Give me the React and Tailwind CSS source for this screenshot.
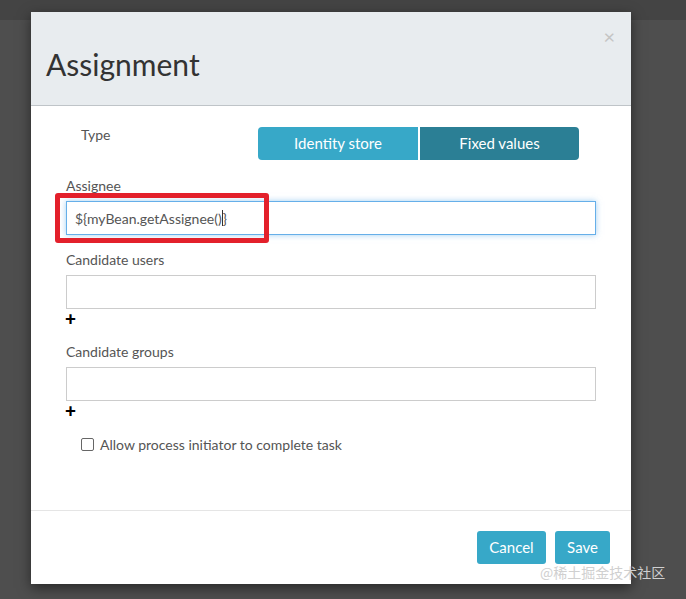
import React from "react";

function Field({ label, children }) {
  return (
    <div className="flex flex-col">
      <label className="text-[14px] text-[#555] leading-[20px] mb-[5px]">{label}</label>
      {children}
    </div>
  );
}

function Plus() {
  return <div className="text-[19px] font-black text-black leading-[14px] h-[14px] mt-[3px] ml-[-1px]">+</div>;
}

export default function App() {
  return (
    <div
      className="relative w-[686px] h-[599px] bg-[#4e4e4e] overflow-hidden"
      style={{ fontFamily: "Lato, 'Noto Sans', sans-serif" }}
    >
      <div className="h-[20px] bg-[#444]" />

      {/* modal */}
      <div className="absolute left-[31px] top-[12px] w-[600px] h-[572px] bg-white flex flex-col shadow-[0_4px_12px_rgba(0,0,0,0.5)]">
        <div className="relative h-[94px] bg-[#e8ecef] border-b border-[#bfc4c8] flex items-center px-[15px] pt-[10px]">
          <h1 className="text-[30px] text-[#333] leading-none">Assignment</h1>
          <button className="absolute right-[16px] top-[14px] text-[20px] text-[#c4c4c4] leading-none">×</button>
        </div>

        <div className="relative flex-1 flex flex-col px-[35px] pt-[21px]">
          <div className="flex items-start">
            <div className="w-[192px] pl-[15px] mt-[-2px] text-[14px] text-[#555] leading-[20px]">Type</div>
            <div className="flex">
              <button className="w-[160px] h-[33px] rounded-l-[4px] bg-[#37a8c8] text-white text-[15px]">Identity store</button>
              <button className="ml-[2px] w-[159px] h-[33px] rounded-r-[4px] bg-[#2b7f95] text-white text-[15px]">Fixed values</button>
            </div>
          </div>

          <div className="mt-[16px]">
            <Field label="Assignee">
              <div className="relative w-[530px] h-[34px] border border-[#66afe9] shadow-[0_0_6px_rgba(102,175,233,0.6)] flex items-center px-[8px] text-[14px] text-[#555]">
                <span>{"${myBean.getAssignee()"}</span>
                <span className="inline-block w-[1px] h-[16px] bg-[#333]" />
                <span>{"}"}</span>
              </div>
            </Field>
          </div>

          <div className="mt-[15px]">
            <Field label="Candidate users">
              <div className="w-[530px] h-[34px] border border-[#ccc]" />
            </Field>
            <Plus />
          </div>

          <div className="mt-[16px]">
            <Field label="Candidate groups">
              <div className="w-[530px] h-[34px] border border-[#ccc]" />
            </Field>
            <Plus />
          </div>

          <label className="flex items-center mt-[16px] ml-[15px] text-[14px] text-[#555]">
            <span className="w-[13px] h-[13px] border border-[#666] rounded-[2px] bg-white mr-[6px]" />
            Allow process initiator to complete task
          </label>

          {/* highlight box */}
          <div className="absolute left-[24px] top-[87px] w-[214px] h-[50px] border-[5px] border-[#e3202b] rounded-[3px]" />
        </div>

        <div className="h-[74px] border-t border-[#e5e5e5] flex items-start justify-end pt-[20px] pr-[21px] gap-[9px]">
          <button className="h-[33px] w-[69px] rounded-[3px] bg-[#37a8c8] text-white text-[15px]">Cancel</button>
          <button className="h-[33px] w-[55px] rounded-[3px] bg-[#37a8c8] text-white text-[15px]">Save</button>
        </div>
      </div>

      <div
        className="absolute left-[540px] top-[562px] text-[14px] text-[#d0d0d0] leading-[20px]"
        style={{ fontFamily: "'Noto Sans CJK SC', sans-serif" }}
      >
        @稀土掘金技术社区
      </div>
    </div>
  );
}
